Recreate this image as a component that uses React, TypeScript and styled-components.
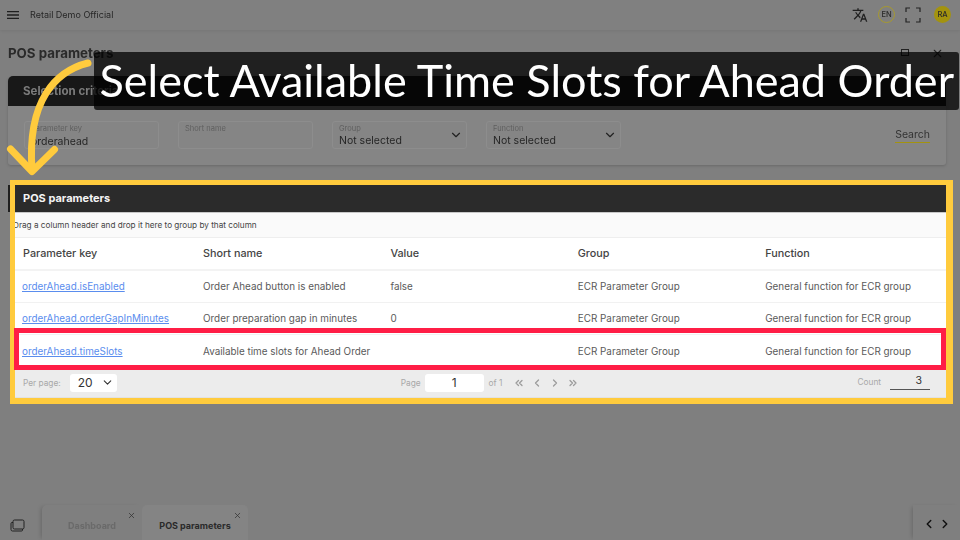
import React from "react";
import styled, { createGlobalStyle } from "styled-components";
import { MdTranslate, MdMenu } from "react-icons/md";
import { ChevronDown, ChevronLeft, ChevronRight, ChevronsLeft, ChevronsRight, X } from "lucide-react";

const GlobalStyle = createGlobalStyle`
  html, body { margin: 0; padding: 0; background: #7f7f7f; }
  * { box-sizing: border-box; }
  body { font-family: Inter, "Liberation Sans", sans-serif; }
`;

const Page = styled.div`
  position: relative;
  width: 960px;
  height: 540px;
  overflow: hidden;
  background: #7f7f7f;
`;

// the captured app behind the annotations is a little soft in the reference
const Screen = styled.div`
  height: 540px;
  display: flex;
  flex-direction: column;
  filter: blur(0.35px);
`;

const Topbar = styled.header`
  height: 30px;
  flex: none;
  display: flex;
  align-items: center;
  padding: 0 9px 1px 5px;
  background: #808080;
  box-shadow: 0 1px 3px rgba(0, 0, 0, 0.08);
  color: #1f1f1f;
`;

const AppName = styled.span`
  margin-left: 9px;
  font-size: 9px;
  color: #262626;
`;

const TopActions = styled.div`
  margin-left: auto;
  display: flex;
  align-items: center;
`;

const LangBadge = styled.span`
  width: 17px;
  height: 17px;
  margin: 0 10px 0 10px;
  border-radius: 50%;
  border: 1px solid #a89a2c;
  display: flex;
  align-items: center;
  justify-content: center;
  font-size: 7.5px;
  font-weight: 500;
  color: #2a2a2a;
`;

const UserBadge = styled(LangBadge)`
  margin: 0 0 0 13px;
  background: #a3930f;
  border: none;
`;

const Main = styled.main`
  flex: 1;
  padding: 15px 14px 0 8px;
`;

const TitleRow = styled.div`
  height: 16px;
  display: flex;
  align-items: center;
  color: #262626;
`;

const PageTitle = styled.h1`
  margin: 0;
  font-size: 13.3px;
  font-weight: 700;
  color: #2a2a2a;
`;

const WindowIcons = styled.div`
  margin-left: auto;
  display: flex;
  align-items: center;
  gap: 21px;
  margin-right: 2px;
`;

const CriteriaCard = styled.section`
  margin-top: 15px;
  height: 89px;
  background: #858585;
  border-radius: 5px 5px 3px 3px;
  box-shadow: 0 1px 3px rgba(0, 0, 0, 0.18);
`;

const CriteriaHeader = styled.div`
  height: 30px;
  padding: 0 15px;
  display: flex;
  align-items: center;
  background: #181818;
  border-radius: 5px 5px 0 0;
  font-size: 11.5px;
  font-weight: 700;
  color: #7c7c7c;
`;

const CriteriaBody = styled.div`
  display: flex;
  align-items: flex-start;
  gap: 19px;
  padding: 15px 16px 0;
`;

const Field = styled.div`
  position: relative;
  width: 135px;
  height: 28px;
  padding: 2px 6px;
  border: 1px solid #8d8d8d;
  border-radius: 3px;
`;

const FieldLabel = styled.div`
  font-size: 7.5px;
  line-height: 10px;
  color: #5f5f5f;
`;

const FieldValue = styled.div<{ $typed?: boolean }>`
  margin-top: ${(p) => (p.$typed ? 1 : 0)}px;
  font-size: 10.5px;
  line-height: 13px;
  color: #262626;
`;

const FieldChevron = styled.span`
  position: absolute;
  right: 3px;
  top: 6px;
  display: flex;
  color: #222;
`;

const SearchButton = styled.button`
  margin: 7px 0 0 auto;
  padding: 0 0 1px;
  border: 0;
  border-bottom: 1px solid #a3930f;
  background: none;
  font: inherit;
  font-size: 10.5px;
  color: #333;
`;

const Panel = styled.section`
  position: relative;
  width: 943px;
  margin: 15px 0 0 2px;
  border-style: solid;
  border-color: #ffcb3d;
  border-width: 5px 7px 6px 5px;
  background: #fff;

  &::before {
    content: "";
    position: absolute;
    left: -7px;
    top: 0;
    width: 2px;
    height: 27px;
    background: #1f1f1f;
  }
`;

const PanelHeader = styled.div`
  height: 28px;
  padding: 0 8px 1px;
  display: flex;
  align-items: center;
  background: #2b2b2b;
  border-bottom: 1px solid #c8c8c8;
  font-size: 11px;
  font-weight: 700;
  color: #f4f4f4;
`;

const GroupBar = styled.div`
  height: 25px;
  display: flex;
  align-items: center;
  overflow: hidden;
  background: #fafafa;
  border-bottom: 1px solid #eeeeee;
  font-size: 8.2px;
  color: #444;
  white-space: nowrap;

  span {
    margin-left: -2px;
  }
`;

const HeadRow = styled.div`
  height: 33px;
  display: grid;
  grid-template-columns: 180px repeat(4, 187.4px);
  align-items: center;
  border-bottom: 2px solid #f3f3f3;
  font-size: 10.8px;
  font-weight: 500;
  color: #444;
`;

const Row = styled.div<{ $marked?: boolean }>`
  position: relative;
  height: ${(p) => (p.$marked ? 33 : 32)}px;
  margin-bottom: ${(p) => (p.$marked ? 2 : 0)}px;
  padding-bottom: 2px;
  display: grid;
  grid-template-columns: 180px repeat(4, 187.4px);
  align-items: center;
  border-bottom: ${(p) => (p.$marked ? "0" : "1px solid #f1f1f1")};
  font-size: 9.9px;
  color: #5a5a5a;

  ${(p) =>
    p.$marked &&
    `&::after {
      content: "";
      position: absolute;
      left: -1px;
      right: 0;
      top: -7px;
      bottom: -2px;
      border: 5px solid #ff1e46;
    }`}
`;

const Cell = styled.div`
  padding-left: 8px;
  white-space: nowrap;
`;

const KeyLink = styled.a`
  margin-left: -1px;
  color: #5a8dee;
  text-decoration: underline;
`;

const Footer = styled.div`
  height: 28px;
  display: flex;
  align-items: center;
  padding: 0 16px 2px 8px;
  background: #ececec;
  border-bottom: 1px solid #e2e2e2;
  font-size: 8.3px;
  color: #a8a8a8;
`;

const PageBox = styled.div`
  width: 59px;
  height: 18px;
  margin: 0 5px 0 4px;
  display: flex;
  align-items: center;
  justify-content: center;
  background: #fff;
  border-radius: 3px;
  font-size: 12px;
  color: #333;
`;

const PerPageBox = styled(PageBox)`
  width: 47px;
  margin: 0;
  padding-left: 8px;
  justify-content: flex-start;
`;

const BoxChevron = styled(ChevronDown)`
  margin-left: 8px;
`;

const PerPage = styled.div`
  display: flex;
  align-items: center;
  gap: 9px;
`;

const Pager = styled.div`
  display: flex;
  align-items: center;
  margin-left: 284px;
`;

const PagerIcons = styled.div`
  display: flex;
  align-items: center;
  gap: 6px;
  margin-left: 11px;
  color: #9c9c9c;
`;

const Count = styled.div`
  margin-left: auto;
  display: flex;
  align-items: center;
  gap: 9px;
  margin-top: -1px;
`;

const CountValue = styled.span`
  width: 40px;
  padding: 0 8px 2px 0;
  border-bottom: 1px solid #555;
  text-align: right;
  font-size: 10.5px;
  color: #333;
`;

const TabBar = styled.nav`
  height: 35px;
  flex: none;
  display: flex;
  align-items: stretch;
  padding-left: 10px;
  color: #222;
`;

const TabsIcon = styled.svg`
  width: 15px;
  height: 13px;
  margin: 14px 17px 0 0;
`;

const Tab = styled.div<{ $active?: boolean }>`
  position: relative;
  width: ${(p) => (p.$active ? 106 : 100)}px;
  display: flex;
  align-items: center;
  justify-content: center;
  padding-top: 6px;
  font-size: 9px;
  font-weight: 700;
  color: ${(p) => (p.$active ? "#2a2a2a" : "#6a6a6a")};
  background: ${(p) => (p.$active ? "#848484" : "transparent")};
  border-radius: 5px 5px 0 0;
  box-shadow: ${(p) => (p.$active ? "none" : "-3px 0 4px -2px rgba(0,0,0,0.18)")};
`;

const TabClose = styled.span`
  position: absolute;
  right: 6px;
  top: 6px;
  display: flex;
  color: #333;
`;

const TabNav = styled.div`
  margin-left: auto;
  width: 47px;
  display: flex;
  align-items: center;
  justify-content: center;
  gap: 2px;
  padding-top: 3px;
  color: #111;
  box-shadow: -3px 0 4px -2px rgba(0, 0, 0, 0.18);
`;

const Banner = styled.div`
  position: absolute;
  left: 94px;
  top: 52px;
  width: 865px;
  height: 58px;
  display: flex;
  align-items: center;
  padding: 0 0 2px 5.500px;
  background: rgba(0, 0, 0, 0.75);
  border-radius: 3px;
  font-family: Lato, "Liberation Sans", sans-serif;
  font-size: 45px;
  color: #fff;
  white-space: nowrap;
`;

const ArrowMark = styled.svg`
  position: absolute;
  left: 0;
  top: 50px;
  width: 100px;
  height: 130px;
`;

const rows = [
  { key: "orderAhead.isEnabled", name: "Order Ahead button is enabled", value: "false" },
  { key: "orderAhead.orderGapInMinutes", name: "Order preparation gap in minutes", value: "0" },
  { key: "orderAhead.timeSlots", name: "Available time slots for Ahead Order", value: "" },
];

export default function App() {
  return (
    <Page>
      <GlobalStyle />
      <Screen>
        <Topbar>
          <MdMenu size={16} />
          <AppName>Retail Demo Official</AppName>
          <TopActions>
            <MdTranslate size={16} />
            <LangBadge>EN</LangBadge>
            <svg width="16" height="16" viewBox="0 0 16 16" fill="none" stroke="#222" strokeWidth="1.2">
              <path d="M1 5V1h4M11 1h4v4M15 11v4h-4M5 15H1v-4" />
            </svg>
            <UserBadge>RA</UserBadge>
          </TopActions>
        </Topbar>

        <Main>
          <TitleRow>
            <PageTitle>POS parameters</PageTitle>
            <WindowIcons>
              <svg width="10" height="10" viewBox="0 0 10 10" fill="none" stroke="#222" strokeWidth="1">
                <path d="M1 1.500h8M1.500 1.500v6M8.500 1.500v6M1 7.500h8" />
              </svg>
              <X size={13} />
            </WindowIcons>
          </TitleRow>

          <CriteriaCard>
            <CriteriaHeader>Selection criteria</CriteriaHeader>
            <CriteriaBody>
              <Field>
                <FieldLabel>Parameter key</FieldLabel>
                <FieldValue $typed>orderahead</FieldValue>
              </Field>
              <Field>
                <FieldLabel>Short name</FieldLabel>
              </Field>
              <Field>
                <FieldLabel>Group</FieldLabel>
                <FieldValue>Not selected</FieldValue>
                <FieldChevron>
                  <ChevronDown size={14} />
                </FieldChevron>
              </Field>
              <Field>
                <FieldLabel>Function</FieldLabel>
                <FieldValue>Not selected</FieldValue>
                <FieldChevron>
                  <ChevronDown size={14} />
                </FieldChevron>
              </Field>
              <SearchButton>Search</SearchButton>
            </CriteriaBody>
          </CriteriaCard>

          <Panel>
            <PanelHeader>POS parameters</PanelHeader>
            <GroupBar>
              <span>Drag a column header and drop it here to group by that column</span>
            </GroupBar>
            <HeadRow>
              <Cell>Parameter key</Cell>
              <Cell>Short name</Cell>
              <Cell>Value</Cell>
              <Cell>Group</Cell>
              <Cell>Function</Cell>
            </HeadRow>
            {rows.map((row, i) => (
              <Row key={row.key} $marked={i === 2}>
                <Cell>
                  <KeyLink href="#">{row.key}</KeyLink>
                </Cell>
                <Cell>{row.name}</Cell>
                <Cell>{row.value}</Cell>
                <Cell>ECR Parameter Group</Cell>
                <Cell>General function for ECR group</Cell>
              </Row>
            ))}
            <Footer>
              <PerPage>
                <span>Per page:</span>
                <PerPageBox>
                  20
                  <BoxChevron size={13} />
                </PerPageBox>
              </PerPage>
              <Pager>
                <span>Page</span>
                <PageBox>1</PageBox>
                <span>of 1</span>
                <PagerIcons>
                  <ChevronsLeft size={12} strokeWidth={2.5} />
                  <ChevronLeft size={12} strokeWidth={2.5} />
                  <ChevronRight size={12} strokeWidth={2.5} />
                  <ChevronsRight size={12} strokeWidth={2.5} />
                </PagerIcons>
              </Pager>
              <Count>
                <span>Count</span>
                <CountValue>3</CountValue>
              </Count>
            </Footer>
          </Panel>
        </Main>

        <TabBar>
          <TabsIcon viewBox="0 0 15 13" fill="none" stroke="#222" strokeWidth="1">
            <rect x="3" y="1" width="11" height="9" rx="1.5" />
            <path d="M3 3.500H2A1 1 0 0 0 1 4.500V10.500A1.500 1.500 0 0 0 2.500 12H11.500A1 1 0 0 0 12.500 11V10" />
          </TabsIcon>
          <Tab>
            Dashboard
            <TabClose>
              <X size={9} />
            </TabClose>
          </Tab>
          <Tab $active>
            POS parameters
            <TabClose>
              <X size={9} />
            </TabClose>
          </Tab>
          <TabNav>
            <ChevronLeft size={14} strokeWidth={2.5} />
            <ChevronRight size={14} strokeWidth={2.5} />
          </TabNav>
        </TabBar>
      </Screen>

      <Banner>Select Available Time Slots for Ahead Order</Banner>

      <ArrowMark viewBox="0 50 100 130" fill="none" stroke="#ffcb3d" strokeWidth="7" strokeLinecap="round" strokeLinejoin="round">
        <path d="M88 63C56 71 27 100 32 170" />
        <path d="M10.500 149L32 171.500L54.500 149.500" />
      </ArrowMark>
    </Page>
  );
}
